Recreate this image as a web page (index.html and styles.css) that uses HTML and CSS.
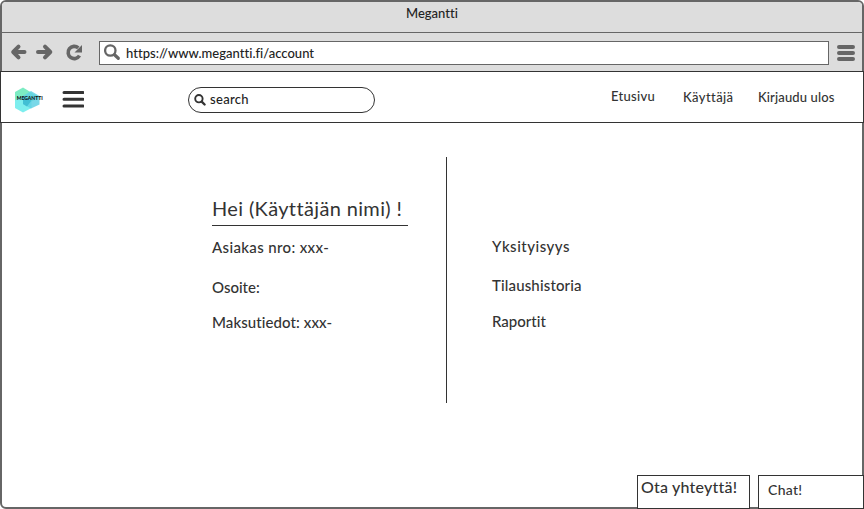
FILE: index.html
```html
<!DOCTYPE html>
<html lang="fi">
<head>
<meta charset="utf-8">
<title>Megantti</title>
<link rel="stylesheet" href="styles.css">
</head>
<body>
<div class="window">
  <div class="titlebar"><span class="t-title">Megantti</span></div>
  <div class="toolbar">
    <svg class="nav-icons" width="80" height="20" viewBox="0 0 80 20">
      <g fill="none" stroke="#666" stroke-width="4" stroke-linecap="round" stroke-linejoin="round">
        <path d="M8.500 4.700 3.200 10 8.500 15.300M4 10H14.500"/>
        <path d="M35 4.700 40.300 10 35 15.300M40 10H28"/>
      </g>
      <path d="M69.500 13.600A6.100 6.100 0 1 1 68.300 5.900" fill="none" stroke="#666" stroke-width="3.600"/>
      <path d="M72 3V10.500H64.500Z" fill="#666"/>
    </svg>
    <div class="address">
      <svg width="18" height="18" viewBox="0 0 18 18"><circle cx="6.300" cy="6.500" r="5.200" fill="none" stroke="#666" stroke-width="2.300"/><path d="M10.500 10.800 14.300 14.300" stroke="#666" stroke-width="3.200" stroke-linecap="round"/></svg>
      <span class="t-url">https://www.megantti.fi/account</span>
    </div>
    <svg class="browser-menu" width="18" height="18" viewBox="0 0 18 18"><path d="M2 3H16M2 9H16M2 15H16" stroke="#666" stroke-width="4" stroke-linecap="round"/></svg>
  </div>
  <header class="header">
    <svg class="logo" width="32" height="26" viewBox="0 0 32 26">
      <path d="M8 .5 24.500 10.500 8 19 0 15.500V5Z" fill="#7cecc3"/>
      <path d="M0 13.500 8 9.500 16.500 13.500V21L8 25.500 0 21Z" fill="#7eeeee"/>
      <path d="M16 4 24.500 9V17.500L16 21.500 8 17V9Z" fill="#62d1e4" opacity=".85"/>
      <path d="M8 9 16.500 13.500 12 19.500 8 17Z" fill="#42bfd4"/>
      <text x="1.700" y="12.500" textLength="26" lengthAdjust="spacingAndGlyphs" class="logo-text">MEGANTTI</text>
    </svg>
    <svg class="menu" width="22" height="18" viewBox="0 0 22 18"><path d="M2 2.500H21M2 9.200H21M2 16H21" stroke="#333" stroke-width="3" stroke-linecap="round"/></svg>
    <div class="search">
      <svg width="12" height="12" viewBox="0 0 12 12"><circle cx="4.900" cy="4.700" r="3.700" fill="none" stroke="#333" stroke-width="1.900"/><path d="M7.700 7.600 10.600 10.500" stroke="#333" stroke-width="2.300" stroke-linecap="round"/></svg>
      <span class="t-search">search</span>
    </div>
    <nav class="nav">
      <a class="t-home">Etusivu</a><a class="t-user">Käyttäjä</a><a class="t-logout">Kirjaudu ulos</a>
    </nav>
  </header>
  <main class="account">
    <section class="details">
      <h1><span class="t-hello">Hei (Käyttäjän nimi) !</span></h1>
      <p class="row-id"><span class="t-id">Asiakas nro: xxx-</span></p>
      <p class="row-address"><span class="t-address">Osoite:</span></p>
      <p class="row-pay"><span class="t-pay">Maksutiedot: xxx-</span></p>
    </section>
    <section class="links">
      <a class="t-privacy">Yksityisyys</a>
      <a class="t-history">Tilaushistoria</a>
      <a class="t-reports">Raportit</a>
    </section>
  </main>
  <footer class="contact">
    <div class="contact-box"><span class="t-contact">Ota yhteyttä!</span></div>
    <div class="chat-box"><span class="t-chat">Chat!</span></div>
  </footer>
</div>
</body>
</html>
```
FILE: styles.css
```css
* { box-sizing: border-box; }
body { margin: 0; background: #fff; color: #333; font: 500 13px/20px Lato, "Liberation Sans", sans-serif; font-variant-ligatures: none; overflow: hidden; }
h1, p { margin: 0; font-weight: 500; }
svg { display: block; flex: none; }
span, a { white-space: nowrap; }
.window { width: 864px; height: 509px; border: 2px solid #666; border-radius: 6px; display: flex; flex-direction: column; background: #fff; }
.titlebar { height: 31px; border-bottom: 1px solid #666; border-radius: 4px 4px 0 0; background: #ddd; padding: 1px 0 0 404px; color: #222; }
.toolbar { height: 38px; background: #ddd; display: flex; padding: 8px 6px 0 8px; }
.nav-icons { margin-top: 1px; }
.address { width: 730px; height: 24px; margin-left: 9px; background: #fff; border: 1px solid #666; display: flex; padding: 1px 4px; gap: 4px; color: #222; }
.address svg { margin-top: 1px; }
.browser-menu { margin: 3px 0 0 8px; }
.header { width: 864px; height: 52px; margin-left: -2px; flex: none; border: 1px solid #333; background: #fff; display: flex; padding-left: 14px; }
.logo { margin-top: 15px; overflow: visible; }
.logo-text { font: 900 6px Lato, sans-serif; fill: #111; }
.menu { margin: 18px 0 0 15px; }
.search { width: 187px; height: 26px; margin: 15px 0 0 104px; border: 1px solid #333; border-radius: 13px; display: flex; padding: 1px 5px; gap: 4px; color: #222; }
.search svg { margin-top: 5px; }
.nav { display: flex; margin-left: 236px; padding-top: 15px; }
.nav a { width: 72px; }
.nav .t-home { margin-top: -1px; }
.nav .t-logout { margin-left: 3px; width: auto; }
.t-url { letter-spacing: .02px; }
.t-search, .t-home { letter-spacing: .3px; }
.t-user { letter-spacing: .4px; }
.t-logout { letter-spacing: .13px; }
.account { display: flex; height: 246px; margin: 34px 0 0 210px; font-size: 15px; }
.details { width: 235px; border-right: 1px solid #333; }
h1 { width: 196px; height: 69px; padding-top: 41px; border-bottom: 1px solid #333; font-size: 20px; font-weight: 400; letter-spacing: .36px; }
.row-id { margin-top: 11px; letter-spacing: .35px; }
.row-address { margin-top: 20px; }
.row-pay { margin-top: 15px; letter-spacing: .08px; }
.links { display: flex; flex-direction: column; padding: 79px 0 0 45px; }
.t-privacy { letter-spacing: .5px; }
.t-history { margin-top: 19px; letter-spacing: .15px; }
.t-reports { margin-top: 16px; }
.contact { display: flex; gap: 8px; margin: auto -2px -2px 635px; }
.contact-box, .chat-box { height: 34px; border: 1px solid #333; background: #fff; }
.contact-box { width: 113px; padding: 1px 3px; font-size: 16px; letter-spacing: .2px; }
.chat-box { width: 106px; padding: 4px 9px; font-size: 14px; letter-spacing: .3px; }
```
